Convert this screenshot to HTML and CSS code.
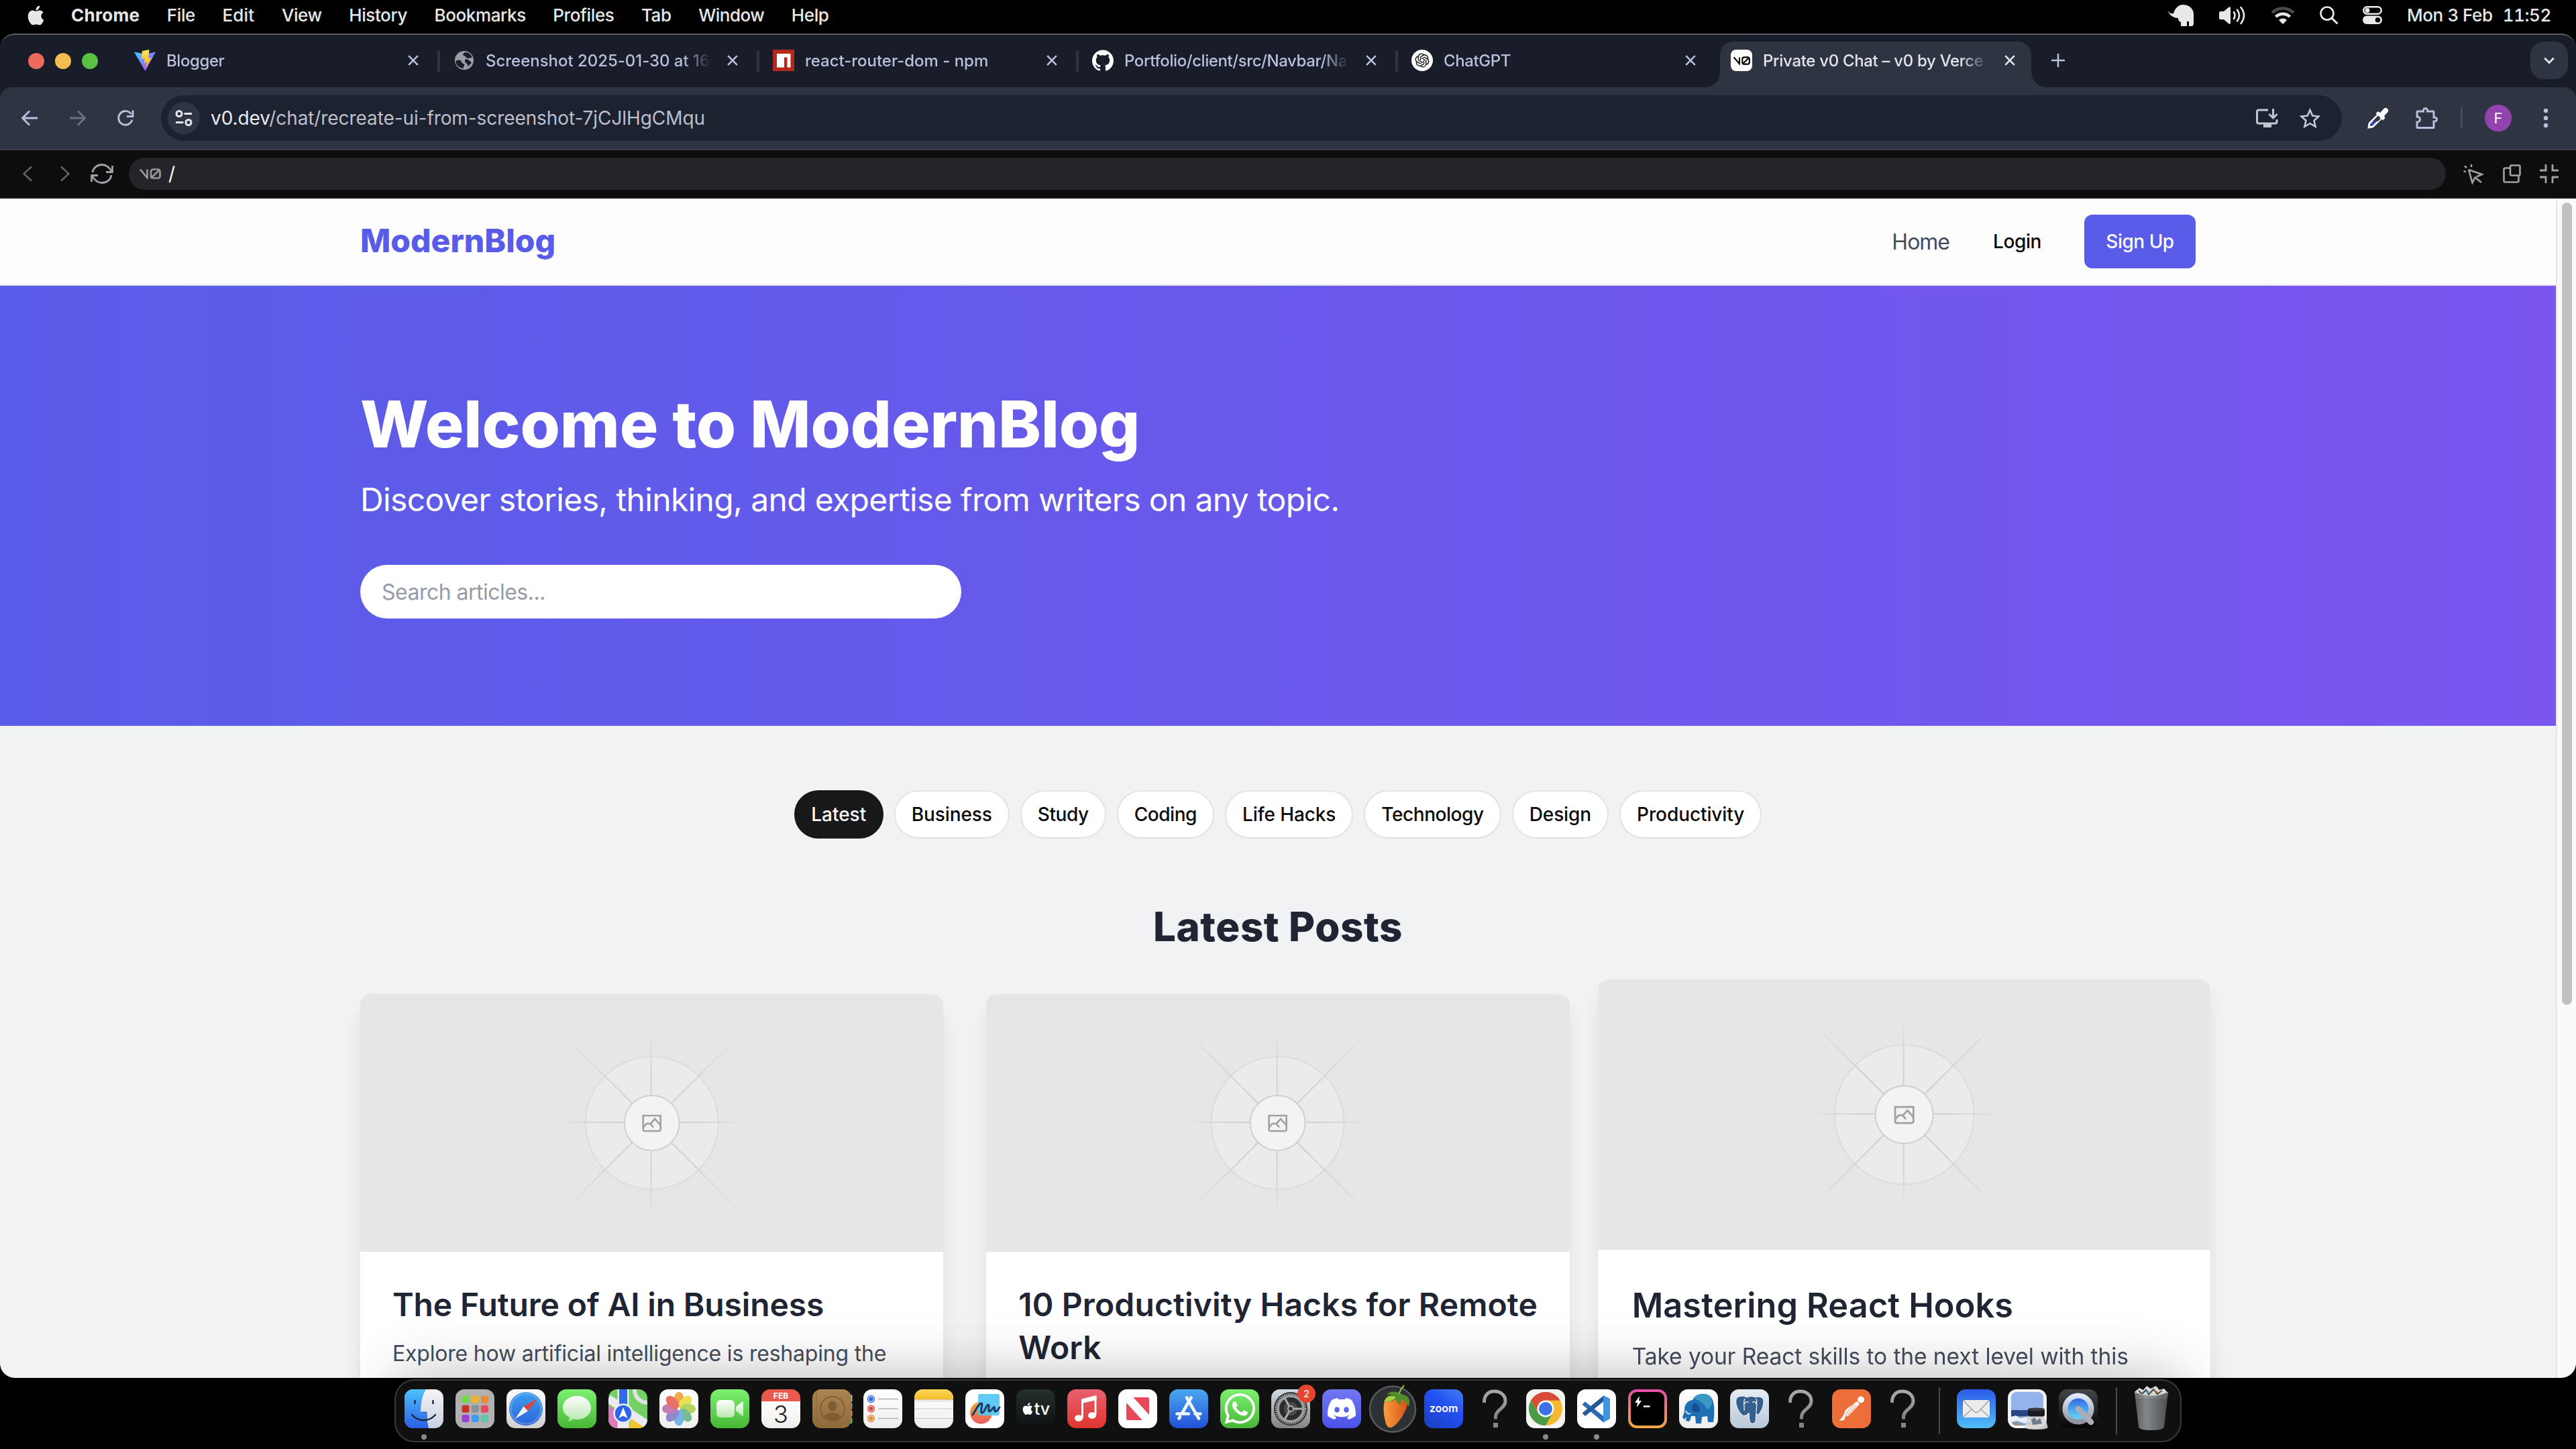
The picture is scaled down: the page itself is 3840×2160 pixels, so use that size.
FILE: index.html
```html
<!DOCTYPE html>
<html lang="en">
<head>
<meta charset="utf-8">
<title>Private v0 Chat – v0 by Vercel</title>
<link rel="stylesheet" href="styles.css">
</head>
<body>

<svg class="defs" width="0" height="0" aria-hidden="true">
  <defs>
    <linearGradient id="g-blue" x1="0" y1="0" x2="0" y2="1"><stop offset="0" stop-color="#4fc1fa"/><stop offset="1" stop-color="#2a5fe8"/></linearGradient>
    <linearGradient id="g-silver" x1="0" y1="0" x2="0" y2="1"><stop offset="0" stop-color="#f4f4f6"/><stop offset="1" stop-color="#c9d0df"/></linearGradient>
    <linearGradient id="g-white" x1="0" y1="0" x2="0" y2="1"><stop offset="0" stop-color="#ffffff"/><stop offset="1" stop-color="#d0d0d2"/></linearGradient>
    <linearGradient id="g-paper" x1="0" y1="0" x2="0" y2="1"><stop offset="0" stop-color="#ffffff"/><stop offset="1" stop-color="#efeeec"/></linearGradient>
    <linearGradient id="g-green" x1="0" y1="0" x2="0" y2="1"><stop offset="0" stop-color="#7df072"/><stop offset="1" stop-color="#47b735"/></linearGradient>
    <linearGradient id="g-bubble" x1="0" y1="0" x2="0" y2="1"><stop offset="0" stop-color="#ffffff"/><stop offset="1" stop-color="#b9e6b0"/></linearGradient>
    <linearGradient id="g-compass" x1="0" y1="0" x2="0" y2="1"><stop offset="0" stop-color="#3fa0ee"/><stop offset="1" stop-color="#2c62dc"/></linearGradient>
    <linearGradient id="g-brown" x1="0" y1="0" x2="0" y2="1"><stop offset="0" stop-color="#ab8550"/><stop offset="1" stop-color="#8f6a3b"/></linearGradient>
    <linearGradient id="g-note" x1="0" y1="0" x2="0" y2="1"><stop offset="0" stop-color="#fbd75a"/><stop offset="1" stop-color="#f4bf27"/></linearGradient>
    <linearGradient id="g-music" x1="0" y1="0" x2="0" y2="1"><stop offset="0" stop-color="#e8616f"/><stop offset="1" stop-color="#e0352f"/></linearGradient>
    <linearGradient id="g-store" x1="0" y1="0" x2="0" y2="1"><stop offset="0" stop-color="#4aa7ef"/><stop offset="1" stop-color="#2450d8"/></linearGradient>
    <linearGradient id="g-gear" x1="0" y1="0" x2="0" y2="1"><stop offset="0" stop-color="#cfdde4"/><stop offset="1" stop-color="#85827f"/></linearGradient>
    <linearGradient id="g-discord" x1="0" y1="0" x2="0" y2="1"><stop offset="0" stop-color="#7177f2"/><stop offset="1" stop-color="#4b52ea"/></linearGradient>
    <linearGradient id="g-ask" x1="0" y1="0" x2="0" y2="1"><stop offset="0" stop-color="#a9a9a9"/><stop offset="1" stop-color="#828282"/></linearGradient>
    <linearGradient id="g-term" x1="0" y1="0" x2="0" y2="1"><stop offset="0" stop-color="#e64cab"/><stop offset="1" stop-color="#f2aa45"/></linearGradient>
    <linearGradient id="g-pg" x1="0" y1="0" x2="0" y2="1"><stop offset="0" stop-color="#e6ecf3"/><stop offset="1" stop-color="#b9c7d8"/></linearGradient>
    <linearGradient id="g-mail" x1="0" y1="0" x2="0" y2="1"><stop offset="0" stop-color="#2d5be8"/><stop offset="1" stop-color="#50bff9"/></linearGradient>
    <linearGradient id="g-qt" x1="0" y1="0" x2="0" y2="1"><stop offset="0" stop-color="#45464a"/><stop offset="1" stop-color="#050505"/></linearGradient>
    <linearGradient id="g-ring" x1="0" y1="0" x2="0" y2="1"><stop offset="0" stop-color="#dfe8f8"/><stop offset="1" stop-color="#8f959f"/></linearGradient>
    <linearGradient id="g-qtin" x1="0" y1="0" x2="0" y2="1"><stop offset="0" stop-color="#2a5be0"/><stop offset="1" stop-color="#6be6fb"/></linearGradient>
    <linearGradient id="g-bin" x1="0" y1="0" x2="1" y2="0"><stop offset="0" stop-color="#5d6064"/><stop offset=".35" stop-color="#8c8f92"/><stop offset="1" stop-color="#515457"/></linearGradient>
    <linearGradient id="g-carrot" x1="0" y1="0" x2="1" y2="0"><stop offset="0" stop-color="#f9a03c"/><stop offset="1" stop-color="#d9501a"/></linearGradient>
    <linearGradient id="g-vite" x1="0" y1="0" x2="1" y2="1"><stop offset="0" stop-color="#41d1ff"/><stop offset="1" stop-color="#bd34fe"/></linearGradient>
    <linearGradient id="g-bolt" x1="0" y1="0" x2="0" y2="1"><stop offset="0" stop-color="#ffea5c"/><stop offset="1" stop-color="#ffa800"/></linearGradient>
    <linearGradient id="g-free" x1="0" y1="0" x2="0" y2="1"><stop offset="0" stop-color="#f5a930"/><stop offset="1" stop-color="#ea5a60"/></linearGradient>
    <radialGradient id="g-ray" gradientUnits="userSpaceOnUse" cx="435" cy="192" r="195"><stop offset=".2" stop-color="#d0d0d0"/><stop offset=".5" stop-color="#d4d4d4"/><stop offset="1" stop-color="#e6e6e6"/></radialGradient>
    <radialGradient id="g-ray-short" gradientUnits="userSpaceOnUse" cx="435" cy="192" r="137"><stop offset=".2" stop-color="#d0d0d0"/><stop offset=".68" stop-color="#d6d6d6"/><stop offset="1" stop-color="#e6e6e6"/></radialGradient>

    <symbol id="apple" viewBox="0 0 24 24"><path d="M12.152 6.896c-.948 0-2.415-1.078-3.96-1.04-2.04.027-3.91 1.183-4.961 3.014-2.117 3.675-.546 9.103 1.519 12.09 1.013 1.454 2.208 3.09 3.792 3.039 1.52-.065 2.09-.987 3.935-.987 1.831 0 2.35.987 3.96.948 1.637-.026 2.676-1.48 3.676-2.948 1.156-1.688 1.636-3.325 1.662-3.415-.039-.013-3.182-1.221-3.22-4.857-.026-3.04 2.48-4.494 2.597-4.559-1.429-2.09-3.623-2.324-4.39-2.376-2-.156-3.675 1.09-4.61 1.09zM15.53 3.83c.843-1.012 1.4-2.427 1.245-3.83-1.207.052-2.662.805-3.532 1.818-.78.896-1.454 2.338-1.273 3.714 1.338.104 2.715-.688 3.559-1.701"/></symbol>
    <symbol id="close" viewBox="0 0 16 16"><path d="M1.2 1.2 14.800 14.800M14.800 1.200 1.200 14.800" fill="none" stroke="currentColor" stroke-width="2.600"/></symbol>
    <symbol id="v0" viewBox="0 0 32 16"><path d="M1 1.500 11.500 14V1.500M20.500 1.500h6.500q3.500 0 3.500 3.500v6.500q0 3-3.500 3h-6.500q-3.500 0-3.500-3V5q0-3.500 3.500-3.500zM18.500 13 29 3" fill="none" stroke="currentColor" stroke-width="2.700"/></symbol>
    <symbol id="placeholder" viewBox="0 0 870 384">
      <rect width="870" height="384" fill="#e6e6e6"/>
      <circle cx="435" cy="192" r="99" fill="#ebebeb" stroke="#dcdcdc" stroke-width="2"/>
      <path d="M434 55V329M298 191H572" stroke="url(#g-ray-short)" stroke-width="2"/>
      <path d="M297 54 573 330M573 54 297 330" stroke="url(#g-ray)" stroke-width="2"/>
      <circle cx="435" cy="192" r="41" fill="#f3f3f3" stroke="#d0d0d0" stroke-width="2"/>
      <g fill="none" stroke="#a0a0a0" stroke-width="2.600"><path d="M422 181h26v20.500a2.500 2.500 0 0 1-2.500 2.500h-21a2.500 2.500 0 0 1-2.500-2.500z"/><path d="m422 199 5-6h5.500l5 5.500M433 193l6.500-7 8.500 9.500"/></g>
    </symbol>
    <symbol id="question" viewBox="0 0 58 58"><path d="M13.500 20v-1.500C13.500 9 19.500 3 28.500 3S45 8.500 45 17.500C45 29 30.500 30 30.500 41v3.500" fill="none" stroke="url(#g-ask)" stroke-width="5"/><rect x="27" y="50" width="7" height="7" fill="#858585"/></symbol>
  </defs>
</svg>

<header class="menubar">
  <svg class="menubar-apple" viewBox="0 0 24 24"><use href="#apple"/></svg>
  <nav class="menus">
    <span class="menu menu-app">Chrome</span>
    <span class="menu">File</span>
    <span class="menu menu-edit">Edit</span>
    <span class="menu">View</span>
    <span class="menu">History</span>
    <span class="menu">Bookmarks</span>
    <span class="menu">Profiles</span>
    <span class="menu">Tab</span>
    <span class="menu menu-window">Window</span>
    <span class="menu">Help</span>
  </nav>
  <div class="status">
    <svg width="40" height="32" viewBox="0 0 40 32"><path d="M0 8c3 5 6 6 9 5C11 6 16 0 23 0c9 0 16 6 16 14v13c0 3-1 5-3 5h-4v-7h-3v7h-9v-6c-3-1-4-3-4-6-5 0-13-3-16-12z" fill="#e8e8e8"/></svg>
    <svg width="40" height="28" viewBox="0 0 40 28"><path d="M0 10q0-2 2-2h5l7-6q3-2 3 1v22q0 3-3 1l-7-6H2q-2 0-2-2z" fill="#e8e8e8"/><path d="M22 9q3 5 0 10M27 5.500q6 8.500 0 17M32.500 2q9 12 0 24" fill="none" stroke="#e8e8e8" stroke-width="2.600" stroke-linecap="round"/></svg>
    <svg width="36" height="26" viewBox="0 0 36 26"><path d="M2 9a23 23 0 0 1 32 0" fill="none" stroke="#4a4a4a" stroke-width="4.500"/><path d="M7.500 15a15 15 0 0 1 21 0" fill="none" stroke="#e8e8e8" stroke-width="4.500"/><path d="M12 20a8.500 8.500 0 0 1 12 0l-6 6z" fill="#e8e8e8"/></svg>
    <svg width="27" height="27" viewBox="0 0 27 27"><circle cx="11" cy="11" r="9.500" fill="none" stroke="#e8e8e8" stroke-width="2.600"/><path d="m18 18 7.500 7.500" stroke="#e8e8e8" stroke-width="3" stroke-linecap="round"/></svg>
    <svg width="29" height="27" viewBox="0 0 29 27"><rect x="1.300" y="1.300" width="26.400" height="10.400" rx="5.200" fill="none" stroke="#e8e8e8" stroke-width="2.600"/><circle cx="7" cy="6.500" r="3.400" fill="#e8e8e8"/><rect y="14.500" width="29" height="12.500" rx="6.200" fill="#e8e8e8"/><circle cx="22.500" cy="20.800" r="3.800" fill="#000"/></svg>
    <span class="clock"><span>Mon 3 Feb</span><span class="clock-time">11:52</span></span>
  </div>
</header>

<main class="window">
  <div class="tabstrip">
    <div class="lights"><i class="light light-close"></i><i class="light light-min"></i><i class="light light-max"></i></div>
    <div class="tabs">
      <div class="tab">
        <svg class="favicon" viewBox="0 0 32 32"><path d="M0 3.500 16.500 32 32 3.500 17 6.500z" fill="url(#g-vite)"/><path d="M22.500 0 12 2l-1 12 5-1-1.500 7 4.500-1.200L17 28l9-16-5 1z" fill="url(#g-bolt)"/></svg>
        <span class="tab-title">Blogger</span>
        <svg class="tab-close"><use href="#close"/></svg>
      </div>
      <div class="tab">
        <svg class="favicon" viewBox="0 0 32 32"><circle cx="16" cy="16" r="14" fill="#9a9da2"/><path d="M5 16c3-1 6-1 7 2 0 3 3 2 4 4s-2 3-1 6C8 27 3 23 3.500 17zM17 4c-3 2-4 4-1 5s3 4 6 4c2 0 4-2 6-1-2-6-6-8-11-8zM17 15c3-2 6 0 7 2 2 0 3 2 2 4l-5 4c1-4-3-5-4-7z" fill="#181d29"/></svg>
        <span class="tab-title tab-title-shot">Screenshot 2025-01-30 at 16</span>
        <svg class="tab-close"><use href="#close"/></svg>
      </div>
      <div class="tab">
        <svg class="favicon" viewBox="0 0 32 32"><path d="M0 0h32v32H0z" fill="#b5281b"/><path d="M6 6h20.500v20.500h-5V11.500H17v15H6z" fill="#fff"/></svg>
        <span class="tab-title tab-title-shot">react-router-dom - npm</span>
        <svg class="tab-close"><use href="#close"/></svg>
      </div>
      <div class="tab">
        <svg class="favicon" viewBox="0 0 24 24"><path fill="#fff" d="M12 .297c-6.630 0-12 5.373-12 12 0 5.303 3.438 9.800 8.205 11.385.6.113.82-.258.82-.577 0-.285-.01-1.040-.015-2.040-3.338.724-4.042-1.610-4.042-1.610C4.422 18.070 3.633 17.700 3.633 17.700c-1.087-.744.084-.729.084-.729 1.205.084 1.838 1.236 1.838 1.236 1.070 1.835 2.809 1.305 3.495.998.108-.776.417-1.305.76-1.605-2.665-.3-5.466-1.332-5.466-5.930 0-1.310.465-2.380 1.235-3.220-.135-.303-.54-1.523.105-3.176 0 0 1.005-.322 3.300 1.230.96-.267 1.980-.399 3-.405 1.020.006 2.040.138 3 .405 2.280-1.552 3.285-1.230 3.285-1.230.645 1.653.24 2.873.12 3.176.765.84 1.230 1.910 1.230 3.220 0 4.610-2.805 5.625-5.475 5.920.42.36.81 1.096.81 2.220 0 1.606-.015 2.896-.015 3.286 0 .315.21.69.825.57C20.565 22.092 24 17.592 24 12.297c0-6.627-5.373-12-12-12"/></svg>
        <span class="tab-title">Portfolio/client/src/Navbar/Na</span>
        <svg class="tab-close"><use href="#close"/></svg>
      </div>
      <div class="tab">
        <svg class="favicon" viewBox="0 0 32 32"><circle cx="16" cy="16" r="16" fill="#fff"/><path transform="translate(5.500 5.500) scale(.875)" fill="#111" d="M22.2819 9.8211a5.9847 5.9847 0 0 0-.5157-4.9108 6.0462 6.0462 0 0 0-6.5098-2.9A6.0651 6.0651 0 0 0 4.9807 4.1818a5.9847 5.9847 0 0 0-3.9977 2.9 6.0462 6.0462 0 0 0 .7427 7.0966 5.98 5.98 0 0 0 .511 4.9107 6.051 6.051 0 0 0 6.5146 2.9001A5.9847 5.9847 0 0 0 13.2599 24a6.0557 6.0557 0 0 0 5.7718-4.2058 5.9894 5.9894 0 0 0 3.9977-2.9001 6.0557 6.0557 0 0 0-.7475-7.0729zm-9.022 12.6081a4.4755 4.4755 0 0 1-2.8764-1.0408l.1419-.0804 4.7783-2.7582a.7948.7948 0 0 0 .3927-.6813v-6.7369l2.02 1.1686a.071.071 0 0 1 .038.052v5.5826a4.504 4.504 0 0 1-4.4945 4.4944zm-9.6607-4.1254a4.4708 4.4708 0 0 1-.5346-3.0137l.142.0852 4.783 2.7582a.7712.7712 0 0 0 .7806 0l5.8428-3.3685v2.3324a.0804.0804 0 0 1-.0332.0615L9.74 19.9502a4.4992 4.4992 0 0 1-6.1408-1.6464zM2.3408 7.8956a4.485 4.485 0 0 1 2.3655-1.9728V11.6a.7664.7664 0 0 0 .3879.6765l5.8144 3.3543-2.0201 1.1685a.0757.0757 0 0 1-.071 0l-4.8303-2.7865A4.504 4.504 0 0 1 2.3408 7.872zm16.5963 3.8558L13.1038 8.364 15.1192 7.2a.0757.0757 0 0 1 .071 0l4.8303 2.7913a4.4944 4.4944 0 0 1-.6765 8.1042v-5.6772a.79.79 0 0 0-.407-.667zm2.0107-3.0231l-.142-.0852-4.7735-2.7818a.7759.7759 0 0 0-.7854 0L9.409 9.2297V6.8974a.0662.0662 0 0 1 .0284-.0615l4.8303-2.7866a4.4992 4.4992 0 0 1 6.6802 4.66zM8.3065 12.863l-2.02-1.1638a.0804.0804 0 0 1-.038-.0567V6.0742a4.4992 4.4992 0 0 1 7.3757-3.4537l-.142.0805L8.704 5.459a.7948.7948 0 0 0-.3927.6813zm1.0976-2.3654l2.602-1.4998 2.6069 1.4998v2.9994l-2.5974 1.4997-2.6067-1.4997Z"/></svg>
        <span class="tab-title">ChatGPT</span>
        <svg class="tab-close"><use href="#close"/></svg>
      </div>
      <div class="tab tab-active">
        <span class="favicon favicon-v0"><svg width="25" height="13"><use href="#v0"/></svg></span>
        <span class="tab-title tab-title-active">Private v0 Chat – v0 by Verce</span>
        <svg class="tab-close"><use href="#close"/></svg>
      </div>
    </div>
    <svg class="tab-add" viewBox="0 0 20 20"><path d="M10 0v20M0 10h20" stroke="#b9bfdd" stroke-width="2.600"/></svg>
    <div class="tab-search"><svg width="16" height="11" viewBox="0 0 16 11"><path d="m1.200 1.500 6.800 7 6.800-7" fill="none" stroke="#e3e5ee" stroke-width="2.800"/></svg></div>
  </div>

  <div class="toolbar">
    <div class="nav-buttons">
      <svg width="26" height="24" viewBox="0 0 26 24"><path d="M25 12H3M13 1.500 2.500 12 13 22.500" fill="none" stroke="#b9bfdd" stroke-width="2.800"/></svg>
      <svg width="26" height="24" viewBox="0 0 26 24"><path d="M1 12h22M13 1.500 23.500 12 13 22.500" fill="none" stroke="#6d7283" stroke-width="2.800"/></svg>
      <svg width="25" height="24" viewBox="0 0 25 24"><path d="M22 14.500A10.300 10.300 0 1 1 20.500 6M23 .5V9.500h-9" fill="none" stroke="#b9bfdd" stroke-width="2.900"/></svg>
    </div>
    <div class="address">
      <span class="site-info"><svg width="26" height="24" viewBox="0 0 26 24"><g fill="none" stroke="#e3e5ee" stroke-width="3"><circle cx="6" cy="5.500" r="4"/><path d="M13.500 5.500H25M1 18.500h11.500"/><circle cx="20" cy="18.500" r="4"/></g></svg></span>
      <span class="url"><b>v0.dev</b>/chat/recreate-ui-from-screenshot-7jCJlHgCMqu</span>
      <svg class="install" width="33" height="28" viewBox="0 0 33 28"><path d="M18 2H4Q1.500 2 1.500 4.500v15Q1.500 22 4 22h24.500q2.500 0 2.500-2.500V16" fill="none" stroke="#c4c7d3" stroke-width="3"/><path d="M11 22h12v6H11z" fill="#c4c7d3"/><path d="M25.500 0v13M19.500 8l6 6 6-6" fill="none" stroke="#c4c7d3" stroke-width="3"/></svg>
      <svg width="31" height="30" viewBox="0 0 31 30"><path d="m15.500 3 3.700 8.600 9.300.9-7 6.200 2.100 9.100-8.100-4.800-8.100 4.800 2.100-9.100-7-6.200 9.300-.9z" fill="none" stroke="#c4c7d3" stroke-width="2.600"/></svg>
    </div>
    <div class="extensions">
      <svg width="32" height="32" viewBox="0 0 32 32"><path d="m19 8 6-6.500a4 4 0 0 1 5.500 5.500L25 13l1.500 3-3.500 3.500L12.500 9 16 6z" fill="#fff"/><path d="M15.500 11.500 3 24l-1 6 6-1 12.500-12.500" fill="#2d44c9" stroke="#fff" stroke-width="2.800"/><path d="m15 13 4.500 4.500-4 3.500H8z" fill="#2f3443"/></svg>
      <svg width="33" height="33" viewBox="0 0 33 33"><path d="M3 6h8.500C10.500 0 18.500 0 17.500 6H26q1 0 1 1v8c6-1 6 7 0 6v8.500q0 1-1 1H3q-1 0-1-1V22c6 0 6-8 0-8V7q0-1 1-1z" fill="none" stroke="#b9bfdd" stroke-width="3"/></svg>
      <i class="ext-divider"></i>
      <span class="avatar">F</span>
      <svg width="8" height="30" viewBox="0 0 8 30"><g fill="#b9bfdd"><circle cx="4" cy="4" r="3.200"/><circle cx="4" cy="15" r="3.200"/><circle cx="4" cy="26" r="3.200"/></g></svg>
    </div>
  </div>

  <div class="preview-bar">
    <svg width="16" height="24" viewBox="0 0 16 24"><path d="M14 1.500 2.500 12 14 22.500" fill="none" stroke="#66666b" stroke-width="2.400"/></svg>
    <svg class="pv-next" width="16" height="24" viewBox="0 0 16 24"><path d="m2 1.500 11.500 10.500L2 22.500" fill="none" stroke="#66666b" stroke-width="2.400"/></svg>
    <svg class="pv-reload" width="34" height="30" viewBox="0 0 34 30"><g fill="none" stroke="#a1a1a8" stroke-width="2.800"><path d="M3 13C4 6 10 1.500 17 1.500c5 0 9 2.500 12.500 7L32 12M32.500 3v9.500H23M31 17c-1 7-7 11.500-14 11.500-5 0-9-2.500-12.500-7L2 18M1.500 27v-9.500H11"/></g></svg>
    <div class="pv-path"><svg width="32" height="16"><use href="#v0"/></svg><span>/</span></div>
    <div class="pv-tools">
      <svg width="31" height="31" viewBox="0 0 31 31"><path d="m9 9 5.500 19.500 4-8L28 28M9 9l20 7-8.500 3.500M1.500 11.500H5M13 1v4M3 3.500 6 6" fill="none" stroke="#a1a1a8" stroke-width="2.600"/></svg>
      <svg width="27" height="28" viewBox="0 0 27 28"><g fill="none" stroke="#a1a1a8" stroke-width="2.600"><rect x="11" y="1.500" width="14.500" height="15" rx="2"/><path d="M11 5.500H3.500q-2 0-2 2V24.500q0 2 2 2h18q2 0 2-2v-8"/></g></svg>
      <svg width="28" height="28" viewBox="0 0 28 28"><path d="M9 0v9H0M19 0v9h9M9 28v-9H0M19 28v-9h9" fill="none" stroke="#a1a1a8" stroke-width="2.800"/></svg>
    </div>
  </div>

  <div class="viewport">
    <div class="page">
      <header class="site-header">
        <div class="container site-nav">
          <a class="brand">ModernBlog</a>
          <a class="home">Home</a>
          <a class="login">Login</a>
          <a class="signup">Sign Up</a>
        </div>
      </header>

      <section class="hero">
        <div class="container">
          <h1>Welcome to ModernBlog</h1>
          <p>Discover stories, thinking, and expertise from writers on any topic.</p>
          <input class="search" type="text" placeholder="Search articles...">
        </div>
      </section>

      <section class="container posts">
        <div class="categories">
          <span class="pill pill-active">Latest</span>
          <span class="pill">Business</span>
          <span class="pill pill-tight">Study</span>
          <span class="pill pill-tight">Coding</span>
          <span class="pill">Life Hacks</span>
          <span class="pill pill-tight">Technology</span>
          <span class="pill">Design</span>
          <span class="pill">Productivity</span>
        </div>
        <h2>Latest Posts</h2>
        <div class="cards">
          <article class="card">
            <svg class="card-image"><use href="#placeholder"/></svg>
            <div class="card-body"><h3 class="title-ai">The Future of AI in Business</h3><p>Explore how artificial intelligence is reshaping the</p></div>
          </article>
          <article class="card">
            <svg class="card-image"><use href="#placeholder"/></svg>
            <div class="card-body card-body-wide"><h3>10 Productivity Hacks for Remote Work</h3></div>
          </article>
          <article class="card card-hover">
            <svg class="card-image"><use href="#placeholder"/></svg>
            <div class="card-body"><h3>Mastering React Hooks</h3><p>Take your React skills to the next level with this</p></div>
          </article>
        </div>
      </section>
    </div>
    <div class="scrollbar"><i class="thumb"></i></div>
  </div>
</main>

<footer class="dock">
  <div class="app running"><svg viewBox="0 0 58 58"><rect width="58" height="58" rx="13" fill="url(#g-silver)"/><path d="M32 0H13A13 13 0 0 0 0 13v32a13 13 0 0 0 13 13h23c-2-8-3-16-3-24h-9C24 20 27 8 32 0z" fill="url(#g-blue)"/><path d="M11 38c10 11 25 11 35 0M15.500 17v4M42.500 17v4" fill="none" stroke="#17263a" stroke-width="2.400" stroke-linecap="round"/><path d="M24.500 34H33c0 4 0 7 .3 10" fill="none" stroke="#35639c" stroke-width="1"/></svg></div>
  <div class="app"><svg viewBox="0 0 58 58"><rect width="58" height="58" rx="13" fill="#b1b1b3"/><rect x="9.500" y="9.500" width="11" height="11" rx="3" fill="#6fdc3f"/><rect x="23.800" y="9.500" width="11" height="11" rx="3" fill="#f2b32c"/><rect x="38" y="9.500" width="11" height="11" rx="3" fill="#ea8a2c"/><rect x="9.500" y="23.700" width="11" height="11" rx="3" fill="#c92f22"/><rect x="23.800" y="23.700" width="11" height="11" rx="3" fill="#8b9398"/><rect x="38" y="23.700" width="11" height="11" rx="3" fill="#ea4a58"/><rect x="9.500" y="38" width="11" height="11" rx="3" fill="#9b3fd8"/><rect x="23.800" y="38" width="11" height="11" rx="3" fill="#3a9df5"/><rect x="38" y="38" width="11" height="11" rx="3" fill="#5bc9ac"/></svg></div>
  <div class="app"><svg viewBox="0 0 58 58"><rect width="58" height="58" rx="13" fill="url(#g-white)"/><circle cx="29" cy="29" r="25" fill="url(#g-compass)"/><circle cx="29" cy="29" r="22.500" fill="none" stroke="#b9d7f8" stroke-width="2.500" stroke-dasharray=".8 1.900"/><path d="m46.500 14-21 11.500 6.500 7z" fill="#e0433a"/><path d="m13 44 12.500-18.500 6.500 7z" fill="#f3f3f5"/></svg></div>
  <div class="app"><svg viewBox="0 0 58 58"><rect width="58" height="58" rx="13" fill="url(#g-green)"/><path d="M29 10c12 0 21 7.500 21 17.500S41 45 29 45c-2 0-4-.3-5.500-.7-2 2-5 3.200-8 3.200 2-1.500 3-3.500 3-5.500C12 39 8 33.500 8 27.500 8 17.500 17 10 29 10z" fill="url(#g-bubble)"/></svg></div>
  <div class="app"><svg viewBox="0 0 58 58"><clipPath id="sq"><rect width="58" height="58" rx="13"/></clipPath><g clip-path="url(#sq)"><path d="M0 0h58v58H0z" fill="#74d063"/><path d="M0 24 14 34v24H0z" fill="#dd79bd"/><path d="m31 58 2-14 25 14z" fill="#f5c433"/><path d="M0 14 60 54" stroke="#ececf0" stroke-width="12"/><path d="M22 0v58" stroke="#ececf0" stroke-width="17"/><path d="M22 0v30" stroke="#2f6be8" stroke-width="12"/><circle cx="58" cy="1" r="19" fill="none" stroke="#dfe3e0" stroke-width="6"/></g><circle cx="22" cy="36" r="13.500" fill="#2f66e8" stroke="#e9ecf5" stroke-width="2.600"/><path d="m22 27 6.500 16-6.500-3.500-6.500 3.500z" fill="#fff"/></svg></div>
  <div class="app"><svg viewBox="0 0 58 58"><rect width="58" height="58" rx="13" fill="url(#g-paper)"/><g opacity=".85"><ellipse cx="29" cy="15.500" rx="7.500" ry="11.500" fill="#f09a2e"/><ellipse cx="29" cy="15.500" rx="7.500" ry="11.500" fill="#ecdb34" transform="rotate(45 29 29)"/><ellipse cx="29" cy="15.500" rx="7.500" ry="11.500" fill="#a8cf4a" transform="rotate(90 29 29)"/><ellipse cx="29" cy="15.500" rx="7.500" ry="11.500" fill="#62b480" transform="rotate(135 29 29)"/><ellipse cx="29" cy="15.500" rx="7.500" ry="11.500" fill="#62a9e2" transform="rotate(180 29 29)"/><ellipse cx="29" cy="15.500" rx="7.500" ry="11.500" fill="#7a78c4" transform="rotate(225 29 29)"/><ellipse cx="29" cy="15.500" rx="7.500" ry="11.500" fill="#b968a8" transform="rotate(270 29 29)"/><ellipse cx="29" cy="15.500" rx="7.500" ry="11.500" fill="#e5594e" transform="rotate(315 29 29)"/></g></svg></div>
  <div class="app"><svg viewBox="0 0 58 58"><rect width="58" height="58" rx="13" fill="url(#g-green)"/><rect x="9" y="16" width="27" height="26" rx="6" fill="url(#g-bubble)"/><path d="m38 26 9-7.500q2-1 2 1v19q0 2-2 1L38 32z" fill="url(#g-bubble)"/></svg></div>
  <div class="app calendar"><span class="cal-month">FEB</span><span class="cal-day">3</span></div>
  <div class="app"><svg class="spill" viewBox="0 0 58 58"><rect x="50" y="8" width="9.500" height="11" rx="2" fill="#b9b9b9"/><rect x="50" y="20" width="9.500" height="10" rx="2" fill="#4ea6e8"/><rect x="50" y="31" width="9.500" height="10" rx="2" fill="#ee8a2b"/><rect x="50" y="42" width="9.500" height="9" rx="2" fill="#5bc95a"/><rect width="58" height="58" rx="13" fill="url(#g-brown)"/><path d="M6 2v54" stroke="#8a6435"/><circle cx="30" cy="29" r="18" fill="none" stroke="#7b5a30" stroke-width="1.500"/><ellipse cx="30" cy="25" rx="6.500" ry="7.500" fill="#7f5d33"/><path d="M17 41q13-13 26 0-13 11-26 0z" fill="#7f5d33"/></svg></div>
  <div class="app"><svg viewBox="0 0 58 58"><rect width="58" height="58" rx="13" fill="url(#g-paper)"/><path d="M22 14.500h30M22 29h30M22 43.500h30" stroke="#b2b2b2" stroke-width="1.300"/><g fill="none" stroke-width="1.300"><circle cx="11.500" cy="14.500" r="5" stroke="#2e6fe6"/><circle cx="11.500" cy="29" r="5" stroke="#dd4a3c"/><circle cx="11.500" cy="43.500" r="5" stroke="#e2902f"/></g><circle cx="11.500" cy="14.500" r="3.300" fill="#2e6fe6"/><circle cx="11.500" cy="29" r="3.300" fill="#dd4a3c"/><circle cx="11.500" cy="43.500" r="3.300" fill="#e2902f"/></svg></div>
  <div class="app"><svg viewBox="0 0 58 58"><rect width="58" height="58" rx="13" fill="url(#g-paper)"/><path d="M0 15v-2A13 13 0 0 1 13 0h32a13 13 0 0 1 13 13v2z" fill="url(#g-note)"/><path d="M0 15.500h58M0 29h58M0 43.500h58" stroke="#c9c7c3" stroke-width="1.200"/><path d="M1 17.500h56" stroke="#a9a69d" stroke-width="1.200" stroke-dasharray="1.200 1.200"/></svg></div>
  <div class="app"><svg viewBox="0 0 58 58"><rect width="58" height="58" rx="13" fill="#fff"/><circle cx="23.500" cy="35" r="16.500" fill="url(#g-free)"/><rect x="19" y="7" width="32" height="32" rx="3" fill="#55c6f3" opacity=".92"/><path d="M11 38c5-8 9-17 13-17 3 0-3 14 1 14s6-12 9-12-1 10 2 10 5-7 7-6.500-1 7 2 6.500 4-3 6-6" fill="none" stroke="#173b6b" stroke-width="3" stroke-linecap="round"/></svg></div>
  <div class="app tv"><svg width="18" height="22" viewBox="0 0 24 24"><use href="#apple"/></svg><span>tv</span></div>
  <div class="app"><svg viewBox="0 0 58 58"><rect width="58" height="58" rx="13" fill="url(#g-music)"/><path d="M22.500 43V16L42 11.500V38" fill="none" stroke="#fff" stroke-width="2.800"/><path d="M21.200 14.500 43.400 9v7L21.200 21z" fill="#fff"/><ellipse cx="17" cy="43" rx="6" ry="4.800" fill="#fff"/><ellipse cx="37" cy="39" rx="6" ry="4.800" fill="#fff"/></svg></div>
  <div class="app"><svg viewBox="0 0 58 58"><rect width="58" height="58" rx="13" fill="#fff"/><clipPath id="news"><rect x="12" y="12" width="34" height="34" rx="2"/></clipPath><g clip-path="url(#news)"><path d="M12 12h34v34H12z" fill="#e8485a"/><path d="M8 6 50 52" stroke="#fff" stroke-width="13"/></g></svg></div>
  <div class="app"><svg viewBox="0 0 58 58"><rect width="58" height="58" rx="13" fill="url(#g-store)"/><g stroke="#eef4fd" stroke-width="4.600" stroke-linecap="round"><path d="M32.500 12.500 19.500 35M26 12.500 44 43.500M11.500 36.500H29M38.500 36.500H46.500M16 41l-1.500 2.500"/></g></svg></div>
  <div class="app"><svg viewBox="0 0 58 58"><rect width="58" height="58" rx="13" fill="url(#g-green)"/><path transform="translate(6.500 6) scale(1.900)" fill="#fff" d="M17.472 14.382c-.297-.149-1.758-.867-2.030-.967-.273-.099-.471-.148-.67.15-.197.297-.767.966-.94 1.164-.173.199-.347.223-.644.075-.297-.15-1.255-.463-2.390-1.475-.883-.788-1.480-1.761-1.653-2.059-.173-.297-.018-.458.13-.606.134-.133.298-.347.446-.52.149-.174.198-.298.298-.497.099-.198.05-.371-.025-.52-.075-.149-.669-1.612-.916-2.207-.242-.579-.487-.5-.669-.51-.173-.008-.371-.01-.57-.01-.198 0-.52.074-.792.372-.272.297-1.040 1.016-1.040 2.479 0 1.462 1.065 2.875 1.213 3.074.149.198 2.096 3.200 5.077 4.487.709.306 1.262.489 1.694.625.712.227 1.360.195 1.871.118.571-.085 1.758-.719 2.006-1.413.248-.694.248-1.289.173-1.413-.074-.124-.272-.198-.57-.347m-5.421 7.403h-.004a9.870 9.870 0 01-5.031-1.378l-.361-.214-3.741.982.998-3.648-.235-.374a9.860 9.860 0 01-1.510-5.260c.001-5.450 4.436-9.884 9.888-9.884 2.640 0 5.122 1.030 6.988 2.898a9.825 9.825 0 012.893 6.994c-.003 5.450-4.437 9.884-9.885 9.884m8.413-18.297A11.815 11.815 0 0012.050 0C5.495 0 .16 5.335.157 11.892c0 2.096.547 4.142 1.588 5.945L.057 24l6.305-1.654a11.882 11.882 0 005.683 1.448h.005c6.554 0 11.890-5.335 11.893-11.893a11.821 11.821 0 00-3.480-8.413Z"/></svg></div>
  <div class="app"><svg viewBox="0 0 58 58"><rect width="58" height="58" rx="13" fill="url(#g-gear)"/><circle cx="29" cy="29" r="25" fill="#2c2c2d"/><circle cx="29" cy="29" r="22" fill="none" stroke="#a9adb0" stroke-width="3" stroke-dasharray="1.600 1.300"/><circle cx="29" cy="29" r="19" fill="none" stroke="#9b9ea1" stroke-width="4"/><circle cx="29" cy="29" r="11" fill="#4c4a49" stroke="#222"/><path d="M29 29h18M29 29 20 13M29 29 20 45" stroke="#a9adb0" stroke-width="3"/><circle cx="29" cy="29" r="4" fill="#35332f" stroke="#a9adb0" stroke-width="2"/></svg><span class="badge">2</span></div>
  <div class="app"><svg viewBox="0 0 58 58"><rect width="58" height="58" rx="13" fill="url(#g-discord)"/><path transform="translate(8 8) scale(1.750)" fill="#fff" d="M20.317 4.3698a19.7913 19.7913 0 00-4.8851-1.5152.0741.0741 0 00-.0785.0371c-.211.3753-.4447.8648-.6083 1.2495-1.8447-.2762-3.68-.2762-5.4868 0-.1636-.3933-.4058-.8742-.6177-1.2495a.077.077 0 00-.0785-.037 19.7363 19.7363 0 00-4.8852 1.515.0699.0699 0 00-.0321.0277C.5334 9.0458-.319 13.5799.0992 18.0578a.0824.0824 0 00.0312.0561c2.0528 1.5076 4.0413 2.4228 5.9929 3.0294a.0777.0777 0 00.0842-.0276c.4616-.6304.8731-1.2952 1.226-1.9942a.076.076 0 00-.0416-.1057c-.6528-.2476-1.2743-.5495-1.8722-.8923a.077.077 0 01-.0076-.1277c.1258-.0943.2517-.1923.3718-.2914a.0743.0743 0 01.0776-.0105c3.9278 1.7933 8.18 1.7933 12.0614 0a.0739.0739 0 01.0785.0095c.1202.099.246.1981.3728.2924a.077.077 0 01-.0066.1276 12.2986 12.2986 0 01-1.873.8914.0766.0766 0 00-.0407.1067c.3604.698.7719 1.3628 1.225 1.9932a.076.076 0 00.0842.0286c1.961-.6067 3.9495-1.5219 6.0023-3.0294a.077.077 0 00.0313-.0552c.5004-5.177-.8382-9.6739-3.5485-13.6604a.061.061 0 00-.0312-.0286zM8.02 15.3312c-1.1825 0-2.1569-1.0857-2.1569-2.419 0-1.3332.9555-2.4189 2.157-2.4189 1.2108 0 2.1757 1.0952 2.1568 2.419 0 1.3332-.9555 2.4189-2.1569 2.4189zm7.9748 0c-1.1825 0-2.1569-1.0857-2.1569-2.419 0-1.3332.9554-2.4189 2.1569-2.4189 1.2108 0 2.1757 1.0952 2.1568 2.419 0 1.3332-.946 2.4189-2.1568 2.4189Z"/></svg></div>
  <div class="app"><svg class="spill" viewBox="0 0 58 58"><circle cx="29" cy="29.500" r="34" fill="#2e3134" stroke="#565a5e" stroke-width="2.500"/><path d="M17 18c4-6 30-6 34 2 0 12-14 32-22 36-5 3-9-1-10-5-3-10-5-24-2-33z" fill="url(#g-carrot)"/><path d="M34 12c-8-3-14 0-17 7 7-1 13-1 17-4 1 4 3 7 7 8 1-4 1-6 0-9 4 2 8 5 12 12 3-10 0-17-9-18-8-5-18-7-24 0 4-1 11 1 14 4z" fill="#4f8f2a"/><path d="M34 12c-8-5-15-2-18 7 8-1 14-2 18-7z" fill="#a9cf3f"/><path d="M38 7q3-7 8-13" fill="none" stroke="#9bbb45" stroke-width="2"/></svg></div>
  <div class="app zoom">zoom</div>
  <div class="app"><svg viewBox="0 0 58 58"><use href="#question"/></svg></div>
  <div class="app running"><svg viewBox="0 0 58 58"><rect width="58" height="58" rx="13" fill="#f3f3f2"/><circle cx="29" cy="29" r="25" fill="#f4b92f"/><path d="M29 29 18.500 35 7.300 16.500A25 25 0 0 1 50.700 16.500H29z" fill="#d94a38"/><path d="M7.300 16.500 18.200 35.300 29 41.500 39.800 35.300 29 54A25 25 0 0 1 7.300 16.500z" fill="#4a9a47"/><circle cx="29" cy="29" r="12.500" fill="#fff"/><circle cx="29" cy="29" r="10" fill="#3b73e6"/></svg></div>
  <div class="app running"><svg viewBox="0 0 58 58"><rect width="58" height="58" rx="13" fill="#fff"/><path d="m8 22 4-3.500 28 22V50L8 23z" fill="#2c6cb8"/><path d="m8 36 4 4 28-22.500V9L8 35z" fill="#245a9c"/><path d="m39 9 10 5v30l-10 5.500z" fill="#3f93e0"/></svg></div>
  <div class="app"><svg viewBox="0 0 58 58"><rect width="58" height="58" rx="13" fill="url(#g-term)"/><rect x="4" y="4" width="50" height="50" rx="9" fill="#000"/><path d="m17 10-7 10h4l-1 7 7-10h-4z" fill="#fff"/><path d="M23 25.500h9.500" stroke="#fff" stroke-width="2.400"/></svg></div>
  <div class="app"><svg viewBox="0 0 58 58"><rect width="58" height="58" rx="13" fill="url(#g-paper)"/><path d="M5 42c1-4 3-6 3-11 0-9 5-14 12-15C25 6 45 2 50 16c3 8 3 20 1 33h-8l-1-9-8 1-1 10h-8l-1-11-6 0c-1 4-1 7-4 8l-4-1 1-6-3 4z" fill="#1f6fb4"/><path d="M21 14c6-10 24-10 28 2 1 6-2 12-8 14-2-8-10-14-20-16z" fill="#3b98c4"/><path d="M22 20q9 2 9 13-8 4-12-3 0-6 3-10z" fill="#14508c"/><path d="M10 32q2 6 7 4" fill="none" stroke="#e8f0f8" stroke-width="1.600"/></svg></div>
  <div class="app"><svg viewBox="0 0 58 58"><rect width="58" height="58" rx="13" fill="url(#g-pg)"/><g fill="#35608e" stroke="#fff" stroke-width="1"><path d="M11 12c7-4 12-1 14 0 5-2 9-2 13 0 4-2 12-1 12 6 0 8-4 16-8 20-3 0-3-3-3-3l-1 12c0 5-8 6-9 0l-1-12c-2 4-9 6-10 3C12 34 5 17 11 12z"/></g><path d="M22 14c-3 6 0 12-1 18M39 14c2 6 0 12 0 20M28 20c-3-3-6-1-6 2M33 20c3-3 6-1 5 2" fill="none" stroke="#fff" stroke-width="1.200"/></svg></div>
  <div class="app"><svg viewBox="0 0 58 58"><use href="#question"/></svg></div>
  <div class="app"><svg viewBox="0 0 58 58"><rect width="58" height="58" rx="13" fill="#ed6e39"/><circle cx="43" cy="15.500" r="5" fill="#fff"/><path d="m37 18 4 4-18 19-2-3-3 8-7 1 6-8 2-6 2-3z" fill="#fff"/><path d="m33 22-13 15M36 24 23 38" stroke="#ed6e39" stroke-width="1"/></svg></div>
  <div class="app"><svg viewBox="0 0 58 58"><use href="#question"/></svg></div>
  <i class="dock-divider"></i>
  <div class="app"><svg viewBox="0 0 58 58"><rect width="58" height="58" rx="13" fill="url(#g-mail)"/><rect x="9" y="16" width="40" height="26" rx="3" fill="#ececec"/><path d="m10 17 15.500 16q3.500 3 7 0L48 17M10 41l12.500-11.500M48 41 35.500 29.500" fill="none" stroke="#a3a3a3" stroke-width="1.500"/></svg></div>
  <div class="app"><svg class="spill" viewBox="0 0 58 58"><rect width="58" height="58" rx="13" fill="#f4f2ef"/><clipPath id="photo"><rect x="5" y="4" width="48" height="50" rx="8"/></clipPath><g clip-path="url(#photo)"><path d="M0 0h58v32H0z" fill="#94b3ea"/><path d="M0 31h58v10H0z" fill="#26447f"/><path d="M0 40h58v18H0z" fill="#7f9cc4"/><path d="m3 42 9-3 6 4 10-2 6 6-9 4-12-4-10 3z" fill="#e9eff8"/><path d="M3 50h9l8 5H3z" fill="#b08a5e"/></g><path d="M30 39h25l4.500 17q.5 4-17 4t-17-4z" fill="#d7d8d8" opacity=".9"/><path d="m35 45 5-3 3 5 5-4 3 8-14 2z" fill="#6f7b8c"/><rect x="30" y="28.500" width="25" height="12" rx="3" fill="#1b1b1d"/><ellipse cx="42.500" cy="30" rx="12.500" ry="2.500" fill="#39393c"/></svg></div>
  <div class="app"><svg viewBox="0 0 58 58"><rect width="58" height="58" rx="13" fill="url(#g-qt)"/><circle cx="29" cy="29" r="19.500" fill="url(#g-qtin)" stroke="url(#g-ring)" stroke-width="8"/><path d="m29 29 19 20" stroke="#a9adb6" stroke-width="8.500" stroke-linecap="round"/></svg></div>
  <i class="dock-divider dock-divider-last"></i>
  <div class="app"><svg class="spill" viewBox="0 0 58 58"><path d="M4 4 11-2l6 3 5-6 6 4 8-4 5 6 7-2 6 7-2 8H6z" fill="#d9d9d6"/><path d="m10 2 5 5 6-6 4 7 7-8 6 7 7-5" fill="none" stroke="#4c4a46" stroke-width="2"/><path d="m20 4 5-2 2 5z" fill="#3fa9c9"/><path d="m34 2 5 2-3 4z" fill="#a8552d"/><path d="M4 4q25 11 50 0l-6 52q-1 5-19 5t-19-5z" fill="url(#g-bin)" opacity=".93"/><path d="M4 4q25 11 50 0" fill="none" stroke="#b5b8ba" stroke-width="1.300"/></svg></div>
</footer>
</body>
</html>
```
FILE: styles.css
```css
* { box-sizing: border-box; }

body {
  margin: 0;
  width: 3840px;
  height: 2160px;
  overflow: hidden;
  background: #000;
  font-family: Inter, "Liberation Sans", sans-serif;
  display: flex;
  flex-direction: column;
}

svg { display: block; flex: none; }
.defs { position: absolute; }

/* ---------- macOS menu bar ---------- */
.menubar {
  height: 50px;
  flex: none;
  display: flex;
  align-items: center;
  padding: 0 37px 5px 39px;
  color: #e8e8e8;
  font-size: 26px;
  font-weight: 500;
}
.menubar-apple { width: 29px; height: 32px; fill: #e8e8e8; }
.menus { display: flex; gap: 40.500px; margin-left: 38px; }
.menu { letter-spacing: -.4px; white-space: nowrap; }
.menu-app { font-weight: 700; letter-spacing: .3px; }
.menu-edit { letter-spacing: .2px; }
.menu-window { letter-spacing: -.5px; }
.status { margin-left: auto; display: flex; align-items: center; gap: 37px; }
.clock { display: flex; gap: 15px; white-space: pre; letter-spacing: -.36px; }
.clock-time { font-feature-settings: "tnum"; letter-spacing: -.4px; }

/* ---------- browser window ---------- */
.window {
  height: 2004px;
  flex: none;
  display: flex;
  flex-direction: column;
  background: #181d29;
  border-top: 2px solid #5b6067;
  border-radius: 22px;
  overflow: hidden;
}
.tabstrip {
  height: 78px;
  flex: none;
  display: flex;
  align-items: center;
  padding: 0 12px 0 42px;
}
.lights { display: flex; gap: 16px; }
.light { width: 24px; height: 24px; border-radius: 50%; }
.light-close { background: #ed6a5e; }
.light-min { background: #f4bd4f; }
.light-max { background: #5bc144; }

.tabs { display: flex; gap: 12px; margin-left: 38px; height: 100%; align-self: flex-end; }
.tab {
  position: relative;
  width: 464px;
  padding: 0 24px 12px 16px;
  margin-top: 10px;
  display: flex;
  align-items: center;
  color: #b9bfdd;
}
.tab:nth-child(-n+4)::after {
  content: "";
  position: absolute;
  right: -8px;
  top: 13px;
  width: 4px;
  height: 32px;
  border-radius: 2px;
  background: #2f3443;
}
.favicon { width: 32px; height: 32px; flex: none; }
.favicon-v0 {
  background: #fff;
  color: #000;
  border-radius: 8px;
  display: flex;
  align-items: center;
  justify-content: center;
}
.tab-title {
  flex: 1;
  margin: 0 25px 0 16px;
  font-size: 24px;
  font-weight: 500;
  letter-spacing: -.42px;
  white-space: nowrap;
  -webkit-mask-image: linear-gradient(90deg, #000 88%, transparent 100%);
  mask-image: linear-gradient(90deg, #000 88%, transparent 100%);
}
.tab-title-shot { letter-spacing: -.03px; }
.tab-close { width: 16px; height: 16px; }
.tab-active {
  background: #2f3443;
  border-radius: 20px 20px 0 0;
  color: #e3e5ee;
}
.tab-title-active { letter-spacing: -.32px; }
.tab-active::before,
.tab-active::after {
  content: "";
  position: absolute;
  bottom: 0;
  width: 22px;
  height: 22px;
}
.tab-active::before { left: -22px; background: radial-gradient(circle at 0 0, transparent 21.500px, #2f3443 22px); }
.tab-active::after { right: -22px; background: radial-gradient(circle at 100% 0, transparent 21.500px, #2f3443 22px); }
.tab-add { width: 20px; height: 20px; margin: 0 0 2px 30px; }
.tab-search {
  width: 56px;
  height: 56px;
  margin: 0 0 2px auto;
  border-radius: 20px;
  background: #2f3443;
  display: flex;
  align-items: center;
  justify-content: center;
}

.toolbar {
  height: 94px;
  flex: none;
  display: flex;
  align-items: center;
  padding: 0 41px 0 31px;
  background: #2f3443;
  border-bottom: 2px solid #3d3f46;
  border-radius: 18px 18px 0 0;
}
.nav-buttons { display: flex; gap: 46px; width: 209px; }
.address {
  width: 3251px;
  height: 68px;
  border-radius: 34px;
  background: #1c2230;
  display: flex;
  align-items: center;
  padding: 0 32px 0 10px;
}
.site-info {
  width: 48px;
  height: 48px;
  border-radius: 50%;
  background: #2f3443;
  display: flex;
  align-items: center;
  justify-content: center;
}
.url { margin-left: 16px; font-size: 28px; letter-spacing: -.09px; color: #bcbfca; }
.url b { font-weight: 400; color: #e8eaf0; }
.install { margin: 0 32px 0 auto; }
.extensions { display: flex; align-items: center; margin-left: 38px; flex: 1; }
.extensions > :nth-child(2) { margin-left: 40px; }
.ext-divider { width: 3px; height: 32px; margin-left: 34px; background: #454a5a; }
.avatar {
  width: 40px;
  height: 40px;
  margin: 0 auto 0 33px;
  border-radius: 50%;
  background: #9343ad;
  color: #fff;
  font-size: 22px;
  line-height: 40px;
  text-align: center;
}

/* ---------- preview bar ---------- */
.preview-bar {
  height: 72px;
  flex: none;
  display: flex;
  align-items: center;
  padding: 0 26px 0 33px;
  background: #0d0d0d;
  border-bottom: 2px solid #1b1b1b;
}
.pv-next { margin-left: 40px; }
.pv-reload { margin-left: 30px; }
.pv-path {
  flex: 1;
  height: 48px;
  margin: 0 25px 0 23px;
  padding-left: 16px;
  border-radius: 24px;
  background: #242529;
  color: #97979e;
  display: flex;
  align-items: center;
  gap: 11px;
}
.pv-path span { color: #fff; font-size: 28px; }
.pv-tools { display: flex; align-items: center; gap: 28.500px; }

/* ---------- web page ---------- */
.viewport { flex: 1; min-height: 0; display: flex; }
.page { flex: 1; overflow: hidden; background: #f1f2f4; }
.scrollbar {
  width: 30px;
  padding: 6px 6px 0 7px;
  background: #fafafa;
  border-left: 2px solid #e6e6e6;
}
.thumb { display: block; height: 1196px; width: 15px; border-radius: 8px; background: #c1c1c1; }
.container { width: 2736px; margin: 0 auto; }

.site-header { height: 130px; background: #fdfdfd; border-bottom: 2px solid #e4e5ea; }
.site-nav { height: 128px; display: flex; align-items: center; }
.brand { margin: 0 auto 3px 0; font-size: 48px; font-weight: 800; letter-spacing: 0; color: #585ce8; }
.home { font-size: 32px; letter-spacing: -1px; color: #434b5b; margin-right: 65px; }
.login { font-size: 28px; font-weight: 500; letter-spacing: -.4px; color: #050505; margin-right: 64px; }
.signup {
  width: 166px;
  height: 80px;
  border-radius: 12px;
  background: #585ce8;
  color: #fafafa;
  font-size: 28px;
  font-weight: 500;
  letter-spacing: -.5px;
  line-height: 80px;
  text-align: center;
}

.hero {
  height: 656px;
  padding-top: 158px;
  background: linear-gradient(90deg, #595ce8, #7a56ef);
  color: #fff;
}
.hero h1 { margin: 0; font-size: 96px; line-height: 96px; font-weight: 800; letter-spacing: -.1px; }
.hero p { margin: 33px 0 65px; font-size: 48px; line-height: 64px; letter-spacing: -.64px; }
.search {
  display: block;
  width: 896px;
  height: 80px;
  padding: 0 32px;
  border: 0;
  border-radius: 40px;
  background: #fff;
  font: 400 32px Inter, "Liberation Sans", sans-serif;
  letter-spacing: -.52px;
}
.search::placeholder { color: #969ba8; opacity: 1; }

.posts { padding-top: 96px; }
.categories { display: flex; justify-content: center; gap: 16px; }
.pill {
  height: 72px;
  padding: 0 24px;
  border: 2px solid #e3e3e6;
  border-radius: 36px;
  background: #fff;
  color: #0a0a0a;
  font-size: 28px;
  font-weight: 500;
  line-height: 68px;
  letter-spacing: -.1px;
}
.pill-tight { letter-spacing: -.44px; }
.pill-active { background: #18181b; border-color: #18181b; color: #fafafa; letter-spacing: 0; padding: 0 23.500px; }
.posts h2 {
  margin: 95px 0 65px;
  font-size: 60px;
  line-height: 72px;
  font-weight: 800;
  letter-spacing: .6px;
  text-align: center;
  color: #1f2532;
}
.cards { display: grid; grid-template-columns: repeat(3, 1fr); gap: 64px; }
.card {
  height: 880px;
  border-radius: 16px;
  background: #fff;
  overflow: hidden;
  box-shadow: 0 20px 30px -6px rgba(0, 0, 0, .1), 0 8px 12px -8px rgba(0, 0, 0, .1);
}
.card-hover { transform: scale(1.05); }
.card-image { width: 100%; height: 384px; background: #e6e6e6; }
.card-body { padding: 47px 48px; }
.card-body-wide { padding-right: 40px; }
.card h3 { margin: 0 0 17px; font-size: 48px; line-height: 64px; font-weight: 600; letter-spacing: .13px; color: #1f2532; }
.card h3.title-ai { letter-spacing: -.14px; }
.card p { margin: 0; font-size: 32px; line-height: 48px; letter-spacing: -.2px; color: #454d5c; }
.card-hover p { letter-spacing: -.11px; }

/* ---------- dock ---------- */
.dock {
  position: relative;
  width: 2664px;
  height: 94px;
  flex: none;
  margin: 2px auto 0;
  padding: 13px 0 0 13px;
  display: flex;
  gap: 18px;
  background: #101010;
  border: 2px solid #3a3a3a;
  border-radius: 30px;
  box-shadow: 0 0 90px rgba(0, 0, 0, .3);
}
.app { position: relative; width: 58px; height: 58px; flex: none; }
.app > svg { width: 58px; height: 58px; }
.spill { overflow: visible; }
.running::after {
  content: "";
  position: absolute;
  left: 25px;
  top: 67px;
  width: 8px;
  height: 8px;
  border-radius: 50%;
  background: #8a8a8a;
}
.calendar {
  border-radius: 13px;
  background: linear-gradient(#e75a4d 18px, #fff 18px, #efedea);
  display: flex;
  flex-direction: column;
  align-items: center;
}
.cal-month { font-size: 12px; font-weight: 700; line-height: 19px; color: #fff; }
.cal-day { font-size: 36px; font-weight: 300; line-height: 36px; color: #222; }
.tv {
  border-radius: 13px;
  background: linear-gradient(#27302e, #0c0f11);
  display: flex;
  align-items: center;
  justify-content: center;
  gap: 1px;
  color: #fff;
  font-size: 25px;
  font-weight: 500;
}
.app.tv > svg { width: 18px; height: 22px; fill: #fff; }
.badge {
  position: absolute;
  right: -8px;
  top: -7px;
  width: 27px;
  height: 27px;
  border-radius: 50%;
  background: #e5452f;
  color: #fff;
  font-size: 15px;
  line-height: 27px;
  text-align: center;
}
.zoom {
  border-radius: 13px;
  background: linear-gradient(215deg, #4081f0, #2350f4 40%, #1b3fc0);
  color: #fff;
  font-size: 16px;
  font-weight: 600;
  line-height: 56px;
  text-align: center;
}
.dock-divider { flex: none; width: 2px; height: 70px; margin: -3px 7px 0; background: #4a4a4a; }
.dock-divider-last { margin: -3px 4px 0 9px; }
```
